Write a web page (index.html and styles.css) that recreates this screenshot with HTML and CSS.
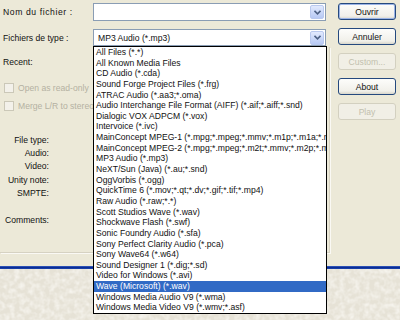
FILE: index.html
```html
<!DOCTYPE html>
<html lang="fr">
<head>
  <meta charset="UTF-8" />
  <meta name="viewport" content="width=device-width, initial-scale=1.0" />
  <title>Ouvrir</title>
  <link rel="stylesheet" href="styles.css">
</head>
<body>
  <div class="screen">
    <div class="dialog">
      <div class="form">
        <div class="row row-name">
          <span class="label label-name">Nom du fichier :</span>
          <div class="field">
            <span class="field-text"></span>
            <span class="arrow"><svg width="7" height="5" viewBox="0 0 7 5"><path d="M0.5 0.8 L3.5 3.8 L6.5 0.8" fill="none" stroke="#4d6185" stroke-width="1.6"/></svg></span>
          </div>
        </div>
        <div class="row row-type">
          <span class="label">Fichiers de type :</span>
          <div class="field">
            <span class="field-text">MP3 Audio (*.mp3)</span>
            <span class="arrow"><svg width="7" height="5" viewBox="0 0 7 5"><path d="M0.5 0.8 L3.5 3.8 L6.5 0.8" fill="none" stroke="#4d6185" stroke-width="1.6"/></svg></span>
          </div>
        </div>

        <!-- resume du fichier -->
        <div class="summary">
          <p class="recent">Recent:</p>
          <label class="check"><span class="box"></span>Open as read-only</label>
          <label class="check"><span class="box"></span>Merge L/R to stereo</label>
          <div class="info">
            <span>File type:</span>
            <span>Audio:</span>
            <span>Video:</span>
            <span>Unity note:</span>
            <span>SMPTE:</span>
            <span class="comments">Comments:</span>
          </div>
        </div>
      </div>

      <div class="buttons">
        <button class="btn default">Ouvrir</button>
        <button class="btn">Annuler</button>
        <button class="btn" disabled>Custom...</button>
        <button class="btn">About</button>
        <button class="btn" disabled>Play</button>
      </div>
    </div>

    <div class="rule"></div>

    <div class="desk">
      <svg width="400" height="51">
        <filter id="grain">
          <feTurbulence type="fractalNoise" baseFrequency="0.2" numOctaves="2" seed="4"/>
          <feColorMatrix type="matrix" values="0 0 0 0 0.99  0 0 0 0 0.98  0 0 0 0 0.95  1.3 0 0 0 -0.45"/>
        </filter>
        <rect width="400" height="51" fill="#e6e2d6"/>
        <rect width="400" height="51" filter="url(#grain)"/>
      </svg>
    </div>

    <!-- liste deroulante ouverte -->
    <ul class="typelist">
      <li>All Files (*.*)</li>
      <li>All Known Media Files</li>
      <li>CD Audio (*.cda)</li>
      <li>Sound Forge Project Files (*.frg)</li>
      <li>ATRAC Audio (*.aa3;*.oma)</li>
      <li>Audio Interchange File Format (AIFF) (*.aif;*.aiff;*.snd)</li>
      <li>Dialogic VOX ADPCM (*.vox)</li>
      <li>Intervoice (*.ivc)</li>
      <li>MainConcept MPEG-1 (*.mpg;*.mpeg;*.mmv;*.m1p;*.m1a;*.mp2)</li>
      <li>MainConcept MPEG-2 (*.mpg;*.mpeg;*.m2t;*.mmv;*.m2p;*.m2v)</li>
      <li>MP3 Audio (*.mp3)</li>
      <li>NeXT/Sun (Java) (*.au;*.snd)</li>
      <li>OggVorbis (*.ogg)</li>
      <li>QuickTime 6 (*.mov;*.qt;*.dv;*.gif;*.tif;*.mp4)</li>
      <li>Raw Audio (*.raw;*.*)</li>
      <li>Scott Studios Wave (*.wav)</li>
      <li>Shockwave Flash (*.swf)</li>
      <li>Sonic Foundry Audio (*.sfa)</li>
      <li>Sony Perfect Clarity Audio (*.pca)</li>
      <li>Sony Wave64 (*.w64)</li>
      <li>Sound Designer 1 (*.dig;*.sd)</li>
      <li>Video for Windows (*.avi)</li>
      <li class="selected">Wave (Microsoft) (*.wav)</li>
      <li>Windows Media Audio V9 (*.wma)</li>
      <li>Windows Media Video V9 (*.wmv;*.asf)</li>
    </ul>
  </div>
</body>
</html>
```

FILE: styles.css
```css
body {
  margin: 0;
  font-family: "Liberation Sans", Arial, sans-serif;
  font-size: 8.6px;
  color: #111;
  background: #ece9d8;
}

.screen {
  position: relative;
  width: 400px;
  height: 320px;
  overflow: hidden;
}

.dialog {
  display: flex;
  height: 266px;
  background: #ece9d8;
}

.form {
  width: 330px;
}

.row {
  display: flex;
  align-items: center;
}

.row-name {
  margin-top: 3px;
  height: 18px;
}

.row-type {
  margin-top: 8px;
  height: 17px;
}

.label {
  width: 90px;
  padding-left: 3px;
}

.label-name {
  letter-spacing: 0.6px;
}

.field {
  display: flex;
  align-items: center;
  justify-content: space-between;
  width: 233px;
  height: 100%;
  box-sizing: border-box;
  border: 1px solid #8a9db4;
  background: #fff;
  padding: 0 1px 0 4px;
}

.arrow {
  display: flex;
  align-items: center;
  justify-content: center;
  width: 12px;
  height: 12px;
  border: 1px solid #b9c9ef;
  border-radius: 2px;
  background: linear-gradient(#e2eafe, #b7c9f4);
}

.summary {
  height: 206px;
  margin-top: 1px;
  padding-top: 10px;
  box-sizing: border-box;
  border-right: 1px solid #d6d2c2;
  border-bottom: 1px solid #d6d2c2;
  box-shadow: 1px 1px 0 #faf9f4;
}

.recent {
  margin: 0;
  padding-left: 3px;
  line-height: 11px;
}

.check {
  display: flex;
  align-items: center;
  gap: 4px;
  height: 13px;
  padding-left: 4px;
  color: #b4b1a2;
  white-space: nowrap;
}

.check:first-of-type {
  margin-top: 13px;
}

.check + .check {
  margin-top: 5px;
}

.box {
  width: 8px;
  height: 8px;
  border: 1px solid #cbc8b8;
  background: #f3f1ea;
}

.info {
  display: flex;
  flex-direction: column;
  align-items: flex-end;
  width: 49px;
  margin-top: 22px;
  line-height: 13.2px;
}

.info .comments {
  margin-top: 14px;
}

.buttons {
  display: flex;
  flex-direction: column;
  gap: 8px;
  padding-top: 3px;
  margin-left: 8px;
}

.btn {
  width: 58px;
  height: 17px;
  padding: 0;
  font-family: inherit;
  font-size: 8.6px;
  color: #111;
  border: 1px solid #25497e;
  border-radius: 3px;
  background: linear-gradient(#fdfdfb, #f1f0ea 80%, #d8d6cb);
}

.btn.default {
  box-shadow: inset 0 0 0 1px #9bb4e6;
}

.btn:disabled {
  color: #c2bfae;
  border-color: #d3d0c0;
  background: #f1efe6;
}

.rule {
  height: 3px;
  background: linear-gradient(#3a62c4, #0b2c94 50%, #1d48b0);
}

.desk {
  height: 51px;
}

.desk svg {
  display: block;
}

.typelist {
  position: absolute;
  top: 46px;
  left: 93px;
  width: 234px;
  height: 268px;
  box-sizing: border-box;
  margin: 0;
  padding: 0;
  list-style: none;
  border: 1px solid #000;
  background: #fff;
  overflow: hidden;
}

.typelist li {
  height: 10.65px;
  line-height: 10.65px;
  padding-left: 2px;
  white-space: nowrap;
}

.typelist .selected {
  background: #316ac5;
  color: #fff;
}
```
